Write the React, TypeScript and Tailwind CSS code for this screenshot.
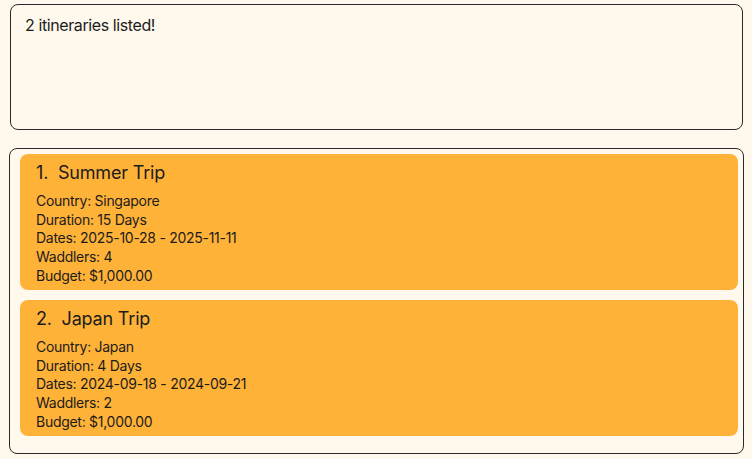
import React from "react";

const trips = [
  { n: 1, name: "Summer Trip", country: "Singapore", duration: "15 Days", dates: "2025-10-28 - 2025-11-11", waddlers: 4, budget: "$1,000.00" },
  { n: 2, name: "Japan Trip", country: "Japan", duration: "4 Days", dates: "2024-09-18 - 2024-09-21", waddlers: 2, budget: "$1,000.00" },
];

export default function App() {
  return (
    <div
      className="w-[752px] h-[459px] bg-[#fef9ec] text-[#1c1c1c] flex flex-col"
      style={{ fontFamily: "Inter, 'Noto Sans', sans-serif" }}
    >
      <div className="ml-[10px] mr-[9px] mt-[4px] h-[126px] rounded-[8px] border border-[#2a2a2a] px-[14px] pt-[10px]">
        <div className="text-[16px] leading-[20px] tracking-[-0.025em]">2 itineraries listed!</div>
      </div>
      <div className="ml-[9px] mr-[8px] mt-[18px] h-[306px] rounded-[8px] border border-[#2a2a2a] pl-[10px] pr-[5px] pt-[5px] flex flex-col gap-[10px]">
        {trips.map((t) => (
          <div key={t.n} className="h-[136px] rounded-[8px] bg-[#ffb238] pl-[16px] pt-[7px]">
            <div className="text-[18px] leading-[24px] whitespace-pre mb-[7px] tracking-[-0.01em]">{`${t.n}.  ${t.name}`}</div>
            <div className="text-[14px] leading-[18.7px] tracking-[-0.02em]">
              <div>Country: {t.country}</div>
              <div>Duration: {t.duration}</div>
              <div>Dates: {t.dates}</div>
              <div>Waddlers: {t.waddlers}</div>
              <div>Budget: {t.budget}</div>
            </div>
          </div>
        ))}
      </div>
    </div>
  );
}
